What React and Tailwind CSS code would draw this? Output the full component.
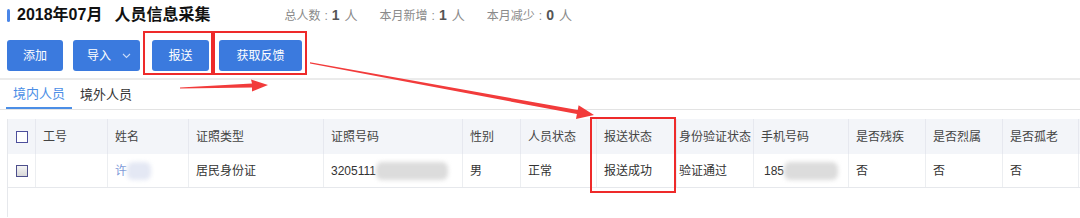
import React from "react";

const cols = [
  { key: "chk", w: 28 },
  { key: "工号", w: 72 },
  { key: "姓名", w: 81 },
  { key: "证照类型", w: 135 },
  { key: "证照号码", w: 139 },
  { key: "性别", w: 58 },
  { key: "人员状态", w: 76 },
  { key: "报送状态", w: 80 },
  { key: "身份验证状态", w: 77 },
  { key: "手机号码", w: 95 },
  { key: "是否残疾", w: 77 },
  { key: "是否烈属", w: 77 },
  { key: "是否孤老", w: 76 },
  { key: "more", w: 60 },
];

const Blur = ({ w, c = "bg-[#dcdcdc]" }) => (
  <span className={`inline-block h-[18px] align-middle rounded-[6px] blur-[2px] ${c}`} style={{ width: w }} />
);

const Stat = ({ label, value }) => (
  <span className="flex items-baseline">
    <span>{label}</span>
    <span className="mx-[4px]">:</span>
    <span className="text-[14px] font-bold text-[#555] mr-[5px]">{value}</span>
    <span className="text-[13px]">人</span>
  </span>
);

const App = () => {
  const row = {
    工号: "",
    姓名: (
      <span className="flex items-center">
        <span className="text-[#7b98d8]">许</span>
        <Blur w={24} c="bg-[#e4e8f4]" />
      </span>
    ),
    证照类型: "居民身份证",
    证照号码: (
      <span className="flex items-center">
        <span>3205111</span>
        <Blur w={72} />
      </span>
    ),
    性别: "男",
    人员状态: "正常",
    报送状态: "报送成功",
    身份验证状态: "验证通过",
    手机号码: (
      <span className="flex items-center pl-[3px]">
        <span>185</span>
        <Blur w={54} />
      </span>
    ),
    是否残疾: "否",
    是否烈属: "否",
    是否孤老: "否",
    more: "",
  };

  const pad = (k) =>
    k === "chk" ? "justify-center" : k === "身份验证状态" ? "pl-[2px]" : "pl-[7px]";

  return (
    <div className="relative w-[1080px] h-[218px] overflow-hidden bg-white font-['Liberation_Sans','Noto_Sans_CJK_SC',sans-serif] text-[#333]">
      {/* --- 标题 --- */}
      <div className="flex items-center h-[30px] pl-[7px]">
        <div className="w-[3px] h-[13px] rounded-full bg-[#4a86e8]" />
        <h1 className="ml-[7px] text-[16px] font-bold text-[#111] leading-none">
          2018年07月<span className="ml-[12px]">人员信息采集</span>
        </h1>
        <div className="ml-[74px] flex gap-[22px] text-[12px] text-[#8a8a8a] leading-none">
          <Stat label="总人数" value="1" />
          <Stat label="本月新增" value="1" />
          <Stat label="本月减少" value="0" />
        </div>
      </div>

      {/* --- 按钮 --- */}
      <div className="flex items-center mt-[10px] pl-[7px] h-[31px] text-[12px] text-white">
        <button className="w-[56px] h-full rounded-[3px] bg-[#3b7ade]">添加</button>
        <button className="ml-[10px] w-[67px] h-full rounded-[3px] bg-[#3b7ade] flex items-center pl-[14px]">
          导入
          <svg className="ml-[11px]" width="9" height="6" viewBox="0 0 9 6" fill="none">
            <path d="M1 1l3.5 3.5L8 1" stroke="#c9dbf7" strokeWidth="1.1" />
          </svg>
        </button>
        <button className="ml-[12px] w-[57px] h-full rounded-[3px] bg-[#3b7ade]">报送</button>
        <button className="ml-[10px] w-[83px] h-full rounded-[3px] bg-[#3b7ade]">获取反馈</button>
      </div>

      <div className="mt-[7px] h-[2px] bg-[#ebebeb]" />

      {/* --- 标签 --- */}
      <div className="flex h-[30px] pl-[6px] text-[13px] border-b border-[#e3e3e3]">
        <div className="w-[66px] flex items-center justify-center text-[#4b8ee6] border-b-2 border-[#4b8ee6]">
          境内人员
        </div>
        <div className="ml-[8px] flex items-center text-[#333]">境外人员</div>
      </div>

      {/* --- 表格 --- */}
      <div className="ml-[7px] mt-[9px] h-[98px] border-l border-[#e6e8ec] text-[12px] whitespace-nowrap">
        <div className="flex h-[35px] bg-[#f3f5f9] text-[#444]">
          {cols.map((c) => (
            <div
              key={c.key}
              className={`flex items-center shrink-0 border-r border-[#e6e8ef] ${pad(c.key)}`}
              style={{ width: c.w }}
            >
              {c.key === "chk" ? (
                <span className="w-[12px] h-[12px] border-[1.5px] border-[#4d4f9c] bg-white" />
              ) : c.key === "more" ? null : (
                c.key
              )}
            </div>
          ))}
        </div>
        <div className="flex h-[34px] border-b border-[#e6e8ec]">
          {cols.map((c) => (
            <div
              key={c.key}
              className={`flex items-center shrink-0 border-r border-[#eceef1] ${pad(c.key)}`}
              style={{ width: c.w }}
            >
              {c.key === "chk" ? (
                <span className="w-[12px] h-[12px] border-[1.5px] border-[#4d4f8c] bg-gradient-to-b from-[#f4f4f4] to-[#d8d8d8]" />
              ) : (
                row[c.key]
              )}
            </div>
          ))}
        </div>
      </div>

      {/* --- 标注 (红框 / 箭头) --- */}
      <div className="absolute left-[143px] top-[31px] w-[70px] h-[44px] border-2 border-[#ee2a2a]" />
      <div className="absolute left-[213px] top-[31px] w-[94px] h-[44px] border-2 border-[#ee2a2a]" />
      <div className="absolute left-[590px] top-[117px] w-[86px] h-[76px] border-2 border-[#ee2a2a]" />
      <svg className="absolute left-0 top-0 pointer-events-none" width="1080" height="218">
        <polygon
          points="180,87.4 252,83.6 251,79.5 268,85 252,91.6 252,87.4 180,88.6"
          fill="#f23b3b"
        />
        <polygon
          points="310,62.2 577.7,110.1 578.6,105.2 594,115 576,119 576.9,114.1 310,63.4"
          fill="#f23b3b"
        />
      </svg>
    </div>
  );
};

export default App;
